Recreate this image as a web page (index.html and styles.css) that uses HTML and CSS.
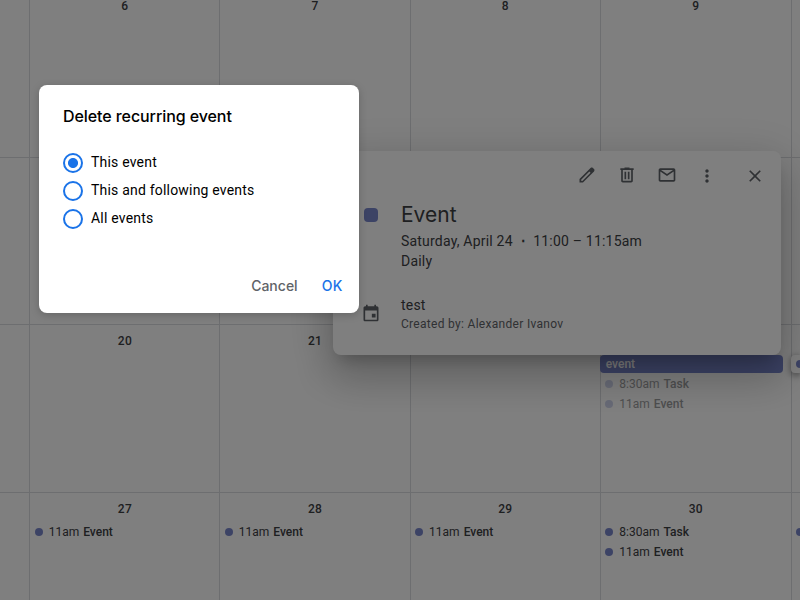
FILE: index.html
```html
<!DOCTYPE html>
<html lang="en">
<head>
<meta charset="utf-8">
<title>Calendar</title>
<link rel="stylesheet" href="styles.css">
</head>
<body>
<main class="calendar">
  <div class="day"></div>
  <div class="day"><div class="date">6</div></div>
  <div class="day"><div class="date">7</div></div>
  <div class="day"><div class="date">8</div></div>
  <div class="day"><div class="date">9</div></div>
  <div class="day"></div>

  <div class="day"></div>
  <div class="day"></div>
  <div class="day"></div>
  <div class="day"></div>
  <div class="day"></div>
  <div class="day"></div>

  <div class="day"></div>
  <div class="day"><div class="date">20</div></div>
  <div class="day"><div class="date">21</div></div>
  <div class="day"></div>
  <div class="day">
    <div class="date"></div>
    <div class="chip solid">event</div>
    <div class="chip past"><i class="dot"></i><span>8:30am</span><b>Task</b></div>
    <div class="chip past"><i class="dot"></i><span>11am</span><b>Event</b></div>
  </div>
  <div class="day"><div class="date"></div><div class="chip raised"><i class="dot"></i></div></div>

  <div class="day"></div>
  <div class="day"><div class="date">27</div><div class="chip"><i class="dot"></i><span>11am</span><b>Event</b></div></div>
  <div class="day"><div class="date">28</div><div class="chip"><i class="dot"></i><span>11am</span><b>Event</b></div></div>
  <div class="day"><div class="date">29</div><div class="chip"><i class="dot"></i><span>11am</span><b>Event</b></div></div>
  <div class="day">
    <div class="date">30</div>
    <div class="chip"><i class="dot"></i><span>8:30am</span><b>Task</b></div>
    <div class="chip"><i class="dot"></i><span>11am</span><b>Event</b></div>
  </div>
  <div class="day"><div class="date"></div><div class="chip"><i class="dot"></i></div></div>
</main>

<section class="details">
  <div class="toolbar">
    <svg viewBox="0 0 24 24"><path d="M20.41 4.94l-1.35-1.35c-.78-.78-2.05-.78-2.83 0L3 16.82V21h4.18L20.41 7.77c.79-.78.79-2.05 0-2.83zm-14 14.12L5 19v-1.36l9.82-9.82 1.41 1.41-9.82 9.83z"/></svg>
    <svg viewBox="0 0 24 24"><path d="M15 4V3H9v1H4v2h1v13c0 1.1.9 2 2 2h10c1.1 0 2-.9 2-2V6h1V4h-5zm2 15H7V6h10v13zM9 8h2v9H9zm4 0h2v9h-2z"/></svg>
    <svg viewBox="0 0 24 24"><path d="M20 4H4c-1.1 0-2 .9-2 2v12c0 1.1.9 2 2 2h16c1.1 0 2-.9 2-2V6c0-1.1-.9-2-2-2zm-.8 2L12 10.8 4.8 6h14.4zM4 18V7.87l8 5.33 8-5.33V18H4z"/></svg>
    <svg class="low" viewBox="0 0 24 24"><path d="M12 8c1.1 0 2-.9 2-2s-.9-2-2-2-2 .9-2 2 .9 2 2 2zm0 2c-1.1 0-2 .9-2 2s.9 2 2 2 2-.9 2-2-.9-2-2-2zm0 6c-1.1 0-2 .9-2 2s.9 2 2 2 2-.9 2-2-.9-2-2-2z"/></svg>
    <svg class="low close" viewBox="0 0 24 24"><path d="M19 6.41L17.59 5 12 10.59 6.41 5 5 6.41 10.59 12 5 17.59 6.41 19 12 13.41 17.59 19 19 17.59 13.41 12z"/></svg>
  </div>
  <div class="row summary">
    <span class="swatch"></span>
    <div>
      <h2>Event</h2>
      <p class="when">Saturday, April 24<span class="sep">⋅</span>11:00 – 11:15am</p>
      <p>Daily</p>
    </div>
  </div>
  <div class="row owner">
    <svg viewBox="0 0 24 24"><path d="M19 4h-1V2h-2v2H8V2H6v2H5c-1.1 0-2 .9-2 2v14c0 1.1.9 2 2 2h14c1.1 0 2-.9 2-2V6c0-1.1-.9-2-2-2zm0 16H5V9h14v11zm-6-7h4.500v4.500H13z"/></svg>
    <div>
      <p>test</p>
      <p class="creator">Created by: Alexander Ivanov</p>
    </div>
  </div>
</section>

<div class="scrim"></div>

<section class="dialog" role="dialog">
  <h1>Delete recurring event</h1>
  <div class="options">
    <label><span class="radio checked"></span>This event</label>
    <label><span class="radio"></span>This and following events</label>
    <label><span class="radio"></span>All events</label>
  </div>
  <div class="actions"><button class="cancel">Cancel</button><button class="ok">OK</button></div>
</section>
</body>
</html>
```

FILE: styles.css
```css
* { box-sizing: border-box; }

body {
  margin: 0;
  width: 800px;
  height: 600px;
  position: relative;
  overflow: hidden;
  background: #fff;
  color: #3c4043;
  font-family: Roboto, "Liberation Sans", sans-serif;
}

h1, h2, p { margin: 0; font-weight: 400; }

.calendar {
  display: grid;
  grid-template-columns: 190.4px 190.05px 190.35px 190.2px 190.7px 9.3px;
  grid-template-rows: 168px 167px 168px 107px;
  margin: -10px 0 0 -161px;
}

.day {
  min-width: 0;
  border-left: 1px solid #dadce0;
  border-bottom: 1px solid #dadce0;
}

.day:nth-child(6n) { overflow: hidden; }
.day:nth-child(n + 19) { border-bottom: 0; }

.date {
  height: 30px;
  padding-top: 8px;
  text-align: center;
  font-size: 12px;
  line-height: 16px;
  font-weight: 500;
  letter-spacing: .3px;
}

.chip {
  display: flex;
  align-items: center;
  height: 18px;
  margin: 0 7.5px 2px 0;
  padding-left: 4.3px;
  border-radius: 4px;
  font-size: 12px;
  line-height: 18px;
  white-space: nowrap;
}

.chip b { margin-left: 4px; font-weight: 500; }

.day:nth-child(6n) .chip { margin-right: 0; border-radius: 4px 0 0 4px; }

.dot {
  flex: none;
  width: 8px;
  height: 8px;
  margin-right: 6px;
  border-radius: 50%;
  background: #7986cb;
}

.solid { background: #7986cb; color: #fff; font-weight: 500; padding-left: 5.8px; margin-left: -1px; }
.past > * { opacity: .5; }
.past > .dot { opacity: .35; }
.day:nth-child(18) { overflow: visible; clip-path: inset(0 0 0 -9px); }
.day:nth-child(18) .raised { margin-left: -1px; padding-left: 5.3px; background: #fff; box-shadow: 0 2px 6px 1px rgba(0, 0, 0, .35); }

.details {
  position: absolute;
  left: 333px;
  top: 151px;
  width: 448px;
  height: 204px;
  border-radius: 8px;
  background: #fff;
  box-shadow: 0 24px 38px 3px rgba(0, 0, 0, .14), 0 9px 46px 8px rgba(0, 0, 0, .12), 0 11px 15px -7px rgba(0, 0, 0, .2);
  font-size: 14px;
  line-height: 20px;
  letter-spacing: .2px;
}

.details svg { display: block; width: 20px; height: 20px; fill: #5f6368; }

.toolbar {
  display: flex;
  justify-content: flex-end;
  gap: 20px;
  height: 48px;
  padding: 14px 16px 0 0;
}

.toolbar .low { margin-top: 1px; }
.toolbar .close { margin-left: 8px; }

.row { display: flex; padding-left: 28px; }
.row > div { margin-left: 20px; }

.swatch {
  width: 14px;
  height: 14px;
  margin: 9px 3px 0;
  border-radius: 4px;
  background: #7986cb;
}

.details h2 {
  height: 32px;
  font: 400 21px/32px Inter, Roboto, sans-serif;
  letter-spacing: 0;
}

.sep { display: inline-block; width: 20.500px; text-align: center; font-weight: 700; }
.owner { margin-top: 24px; }
.owner svg { margin-top: 8px; }
.creator { font-size: 12px; line-height: 18px; color: #5f6368; letter-spacing: .3px; }

.scrim { position: absolute; inset: 0; background: rgba(0, 0, 0, .5); }

.dialog {
  position: absolute;
  left: 39px;
  top: 85px;
  width: 320px;
  height: 228px;
  padding: 19px 16px 9px 24px;
  display: flex;
  flex-direction: column;
  border-radius: 8px;
  background: #fff;
  box-shadow: 0 2px 8px rgba(0, 0, 0, .2);
  color: #000;
}

.dialog h1 { font: 500 16px/24px Inter, Roboto, sans-serif; letter-spacing: -.08px; }

.options { margin-top: 20px; font-size: 14px; letter-spacing: .2px; }
.options label { display: flex; align-items: center; height: 28px; line-height: 26px; padding-bottom: 1px; }

.radio {
  width: 20px;
  height: 20px;
  margin: 2px 8px 0 0;
  border: 2px solid #1a73e8;
  border-radius: 50%;
}

.checked { background: radial-gradient(circle, #1a73e8 4.600px, transparent 5.400px); }

.actions { display: flex; justify-content: flex-end; gap: 24px; margin-top: auto; }

button {
  height: 36px;
  padding: 0;
  border: 0;
  background: none;
  font: 500 14px/36px Inter, Roboto, sans-serif;
}

.cancel { color: #5f6368; }
.ok { color: #1a73e8; letter-spacing: .5px; }
```
